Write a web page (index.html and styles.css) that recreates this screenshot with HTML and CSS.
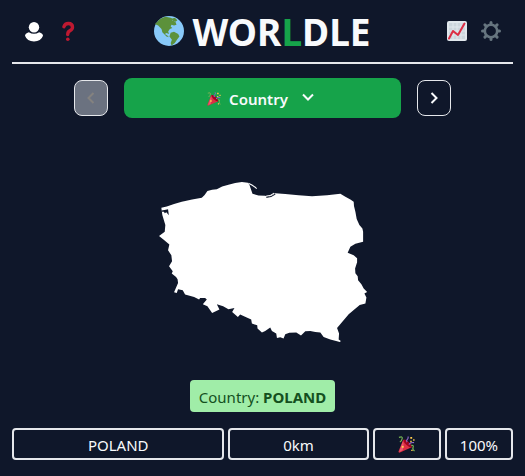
FILE: index.html
```html
<!DOCTYPE html>
<html lang="en">
<head>
<meta charset="utf-8">
<meta name="viewport" content="width=device-width, initial-scale=1">
<title>Worldle</title>
<link rel="stylesheet" href="styles.css">
</head>
<body>
<svg class="sprite" aria-hidden="true">
  <symbol id="party" viewBox="0 0 36 36">
    <path fill="#dd2e44" d="M11 8 1 33q0 3 3 2l25-11q-1-6-7-11T11 8z"/>
    <path fill="#ea596e" d="M11 10 4 29l-1 5 7-4q3-8 1-20z"/>
    <path fill="#a0041e" d="M12 8q-2 3 5 10t12 6q1-4-6-11T12 8z"/>
    <path fill="none" stroke="#77b255" stroke-width="2.5" d="M2 3q8-3 7 2T4 13M28 20q6-1 4 4t3 8"/>
    <path fill="none" stroke="#9266cc" stroke-width="2.5" d="M19 13q-2-4 1-6t1-6M23 18q3-5 11-4"/>
    <path fill="#ffcc4d" d="M26 2h4v4h-4zM32 7h3v3h-3zM26 10h3v3h-3zM8 21h4v4H8zM28 29h3v3h-3z"/>
  </symbol>
</svg>
<div class="page">
  <header class="header">
    <div class="tools">
      <button class="tool" type="button" aria-label="Account">
        <svg class="icon" viewBox="0 0 20 20"><circle cx="10" cy="6.3" r="5.2" fill="#fff"/><path fill="#fff" d="M4.8 11.2Q10 14.4 15.2 11.2 19 12.6 19 14.8 17 20.5 10 20.5T1 14.8q0-2.2 3.8-3.6z"/></svg>
      </button>
      <button class="tool" type="button" aria-label="How to play">
        <svg class="icon" viewBox="0 0 20 20"><path fill="none" stroke="#be1931" stroke-width="3.4" stroke-linecap="round" d="M5.9 5.7Q7 2.5 10.3 2.5q4.2 0 4.2 3.8 0 2.2-2.5 3.3-2.3 1-2.3 4"/><circle cx="9.8" cy="18.2" r="1.8" fill="#be1931"/></svg>
      </button>
    </div>
    <h1 class="title">
      <svg class="globe" viewBox="0 0 36 36" aria-hidden="true"><circle cx="18" cy="18" r="18" fill="#88c9f9"/><path fill="#5c913b" d="M3.5 7.5Q8 2 14 1l6 1 3 1.500-1 2 4 2 1 3-3 1-3-1-1 2 2 2-3 1-2 3 1 3-3-1-2 1 3 2 2 2-3-1-5-5-1-4-4-4-4-2zM22 3l3-1 3 3-2 2-3-1zM20 20l4-1 5 2.500 1.500 3-3 4-2.500 4-4 3-1-3 1.500-4-3-4z"/></svg>
      <span>WOR<span class="accent">L</span>DLE</span>
    </h1>
    <div class="tools">
      <button class="tool" type="button" aria-label="Statistics">
        <svg class="icon" viewBox="0 0 20 20"><rect width="20" height="20" rx="2" fill="#e1e8ed"/><path fill="#ccd6dd" d="M2 2h16v16H2z"/><path stroke="#e1e8ed" d="M2 6h16M2 10h16M2 14h16M6 2v16M10 2v16M14 2v16"/><path fill="none" stroke="#dd2e44" stroke-width="2" stroke-linejoin="round" stroke-linecap="round" d="m2 17.5 4-7.5 5 4 6.500-11.500"/></svg>
      </button>
      <button class="tool" type="button" aria-label="Settings">
        <svg class="icon" viewBox="0 0 20 20"><circle cx="10" cy="10" r="6.2" fill="none" stroke="#66757f" stroke-width="2.600"/><path stroke="#66757f" stroke-width="3" stroke-linecap="round" d="M10 1.5v2M10 16.500v2M1.500 10h2M16.500 10h2M3.900 3.900l1.400 1.400M14.700 14.700l1.400 1.400M3.900 16.100l1.400-1.400M14.700 5.300l1.400-1.400"/></svg>
      </button>
    </div>
  </header>
  <main class="main">
    <nav class="rounds" aria-label="Rounds">
      <button class="step" type="button" aria-label="Previous round" disabled>
        <svg class="chevron" viewBox="0 0 16 16"><path d="m10.500 3-5 5 5 5"/></svg>
      </button>
      <button class="round" type="button" aria-haspopup="listbox">
        <svg class="party" aria-hidden="true"><use href="#party"/></svg>
        <span>Country</span>
        <svg class="chevron down" viewBox="0 0 16 16" aria-hidden="true"><path d="m3 5.500 5 5 5-5"/></svg>
      </button>
      <button class="step" type="button" aria-label="Next round">
        <svg class="chevron" viewBox="0 0 16 16"><path d="m5.500 3 5 5-5 5"/></svg>
      </button>
    </nav>
    <div class="map">
      <svg class="shape" viewBox="150 175 225 175" role="img" aria-label="Country outline">
        <path fill="#fff" d="M161.3 207.7 166.7 206.5 174 204 181.7 201.7 192 199.5 201.7 197.7 204.5 195 207.3 191 212 189.8 216.7 189.3 222 186.5 228.3 184.7 235 183 241.7 182 247.7 182.7 249.3 185 251 190 252.3 193.7 258.3 195.5 265 195.7 268 197 275 193.3 285 194 298.3 195.3 311.7 196.3 326.7 195.3 340 193.7 345 196.7 350 199.5 353.3 201.7 353.6 206 355 211.7 356.3 219 359 225 362 228.5 362.7 231.7 362.7 241.7 355 243.7 350 246.7 347.3 252.7 353.3 255 356.7 258 356.7 262 354.7 268.3 355 273 357.3 276 357.7 280 361 284 363.3 288.3 366.7 291.7 364 293.3 366 297.3 365 303.3 359.3 304.7 348.3 314 336.7 327.7 338.7 333.3 338.3 339.3 340.5 340.7 339.5 341.7 330 339.3 323.3 336.7 320 332.3 315 331.7 310 330.7 305 331 300.7 335.3 296 332.3 289 332.5 285 334 283.3 338.3 280 337 276.7 337.8 276 333.3 271.7 330.7 270 327.3 265 330.7 261.7 332.3 257.3 328.3 257 325 251.7 323.3 251 319.3 246 317 240 314.3 237.7 316.7 232 311.7 234.3 307.7 228.3 309 223 306 216.7 304 219.3 309.3 212 312.7 207.3 306 202.7 304 206.7 299.3 205 297.7 200 297.7 199 299.3 194 296.7 185 294.3 182.7 290 178 289 176.7 292.7 174 292 178 282.7 177.5 279 176 276.7 171.7 273.3 172.7 271 169 266 172 261 171.3 255 168 250 169.3 244.3 164 240 159 236 164.7 231.7 165.3 225 162.3 215z"/>
        <path fill="#0f172a" d="m161.5 210.500 3-.5 3.500-.8.800 6-2.500-3-1.500 1-1-1.500h-2.300z"/>
        <path class="lagoon" d="M266 197.2q4 .5 9-3.2"/>
        <path class="spit" d="M248.2 183.3q4 1.5 8.3 5.2M266 196q5-.3 8-3"/>
      </svg>
    </div>
    <p class="answer">Country: <b>POLAND</b></p>
    <div class="guess">
      <div class="cell name">POLAND</div>
      <div class="cell distance">0km</div>
      <div class="cell"><svg class="party large" role="img" aria-label="Correct"><use href="#party"/></svg></div>
      <div class="cell">100%</div>
    </div>
  </main>
</div>
</body>
</html>
```
FILE: styles.css
```css
* {
  box-sizing: border-box;
}

body {
  margin: 0;
  background: #0f172a;
  color: #f8fafc;
  font: 15px/24px "Noto Sans", "Open Sans", sans-serif;
}

button {
  padding: 0;
  border: 0;
  background: none;
  color: inherit;
  font: inherit;
}

svg {
  display: block;
}

.sprite {
  position: absolute;
  width: 0;
  height: 0;
}

.page {
  max-width: 528px;
  margin: 0 auto;
  padding: 0 12px 16px;
}

.header {
  display: flex;
  align-items: center;
  justify-content: space-between;
  height: 64px;
  padding: 0 12px;
  border-bottom: 2px solid #e5e7eb;
}

.tools {
  display: flex;
  gap: 14px;
}

.icon {
  width: 20px;
  height: 20px;
  overflow: visible;
}

.title {
  display: flex;
  align-items: center;
  gap: 8px;
  margin: 0;
  font-size: 37px;
  line-height: 44px;
  font-weight: 700;
}

.title > span {
  padding-top: 2px;
}

.globe {
  width: 30px;
  height: 30px;
}

.accent {
  color: #16a34a;
}

.main {
  display: flex;
  flex-direction: column;
}

.rounds {
  display: flex;
  align-items: center;
  justify-content: center;
  gap: 16px;
  padding: 14px 62px 0;
}

.step {
  display: grid;
  place-items: center;
  width: 34px;
  height: 36px;
  border: 1px solid #e5e7eb;
  border-radius: 8px;
}

.step:disabled {
  background: #6b7280;
  color: #84827f;
}

.round {
  display: flex;
  flex: 1;
  align-items: center;
  justify-content: center;
  gap: 8px;
  height: 40px;
  padding-top: 2px;
  border-radius: 8px;
  background: #16a34a;
  font-weight: 600;
}

.chevron {
  width: 16px;
  height: 16px;
  fill: none;
  stroke: currentColor;
  stroke-width: 2;
}

.down {
  margin: 0 2px 4px 4px;
}

.party {
  width: 14px;
  height: 14px;
}

.large {
  width: 17px;
  height: 17px;
}

.map {
  display: grid;
  place-items: center;
  padding: 57px 0 30px;
}

.shape {
  width: 45%;
  min-width: 225px;
}

.lagoon,
.spit {
  fill: none;
  stroke: #0f172a;
}

.spit {
  stroke: #fff;
}

.answer {
  align-self: center;
  margin: 0;
  padding: 5px 9px 3px;
  border-radius: 4px;
  background: #a0eda8;
  color: #14501e;
}

.guess {
  display: grid;
  grid-template-columns: repeat(7, 1fr);
  gap: 4px;
  margin-top: 16px;
}

.cell {
  display: flex;
  align-items: center;
  justify-content: center;
  height: 32px;
  padding-top: 2px;
  border: 2px solid #e5e7eb;
  border-radius: 4px;
}

.large {
  margin-bottom: 2px;
}

.name {
  grid-column: span 3;
}

.distance {
  grid-column: span 2;
}
```
